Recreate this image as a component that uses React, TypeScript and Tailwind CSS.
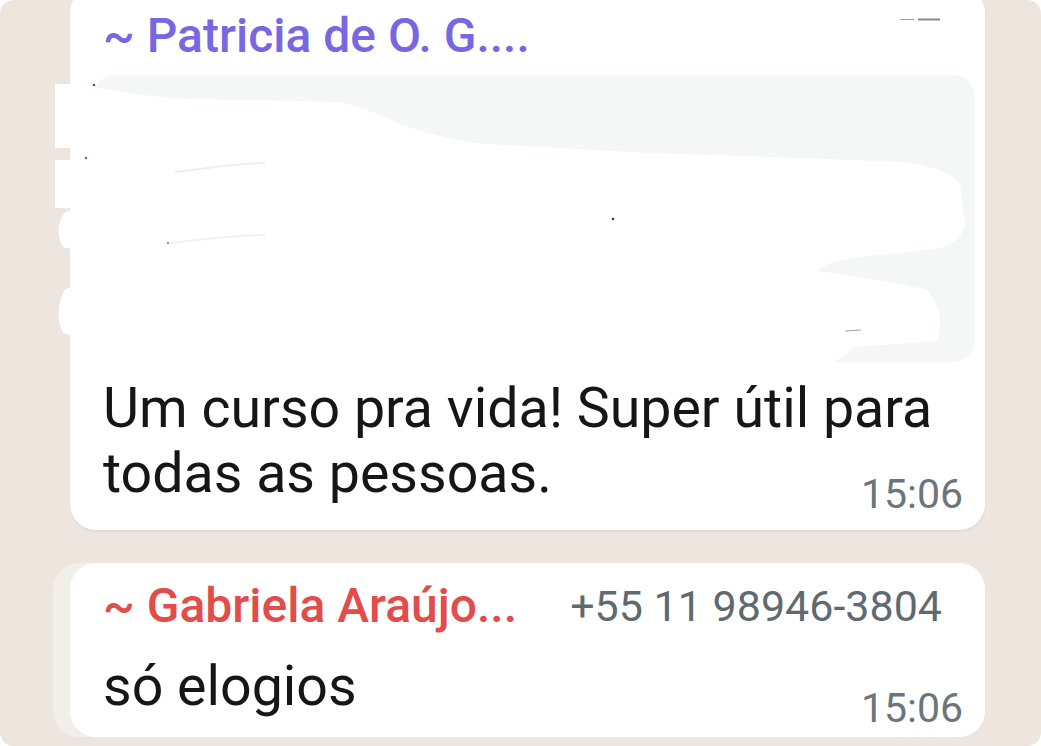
export default function App() {
  return (
    <div className="w-[1041px] h-[746px] bg-white font-['Roboto',sans-serif]">
      <div className="h-full overflow-hidden rounded-[14px] bg-[#ede6de]">
        {/* first message */}
        <div className="-mt-[13px] ml-[70px] w-[915px] rounded-[26px] bg-white pt-[21px] pb-[24px] pl-[33px] pr-[22px] shadow-[0_2px_2px_rgba(0,0,0,0.05)]">
          <div className="flex items-start justify-between">
            <span className="text-[48px] leading-[56px] font-medium text-[#7867e2]">~ Patricia de O. G....</span>
            <svg width="42" height="4" viewBox="0 0 42 4" className="mt-[10px] mr-[21px]">
              <rect x="0" y="1" width="14" height="1" fill="#9a9a9a" />
              <rect x="18" y="0.5" width="22" height="2" fill="#8a8a8a" />
            </svg>
          </div>
          <QuoteBlur />
          <div className="mt-[14px] text-[55.5px] leading-[65px] text-[#161616]">
            <p>Um curso pra vida! Super útil para</p>
            <div className="flex items-end justify-between">
              <span>todas as pessoas.</span>
              <span className="mb-[-9px] text-[41px] leading-[42px] text-[#6a767c]">15:06</span>
            </div>
          </div>
        </div>

        {/* second message */}
        <div className="mt-[33px] ml-[70px] w-[915px] rounded-[26px] bg-white pt-[15px] pb-[18px] pl-[33px] pr-[22px] shadow-[-17px_0_0_#f2eee9]">
          <div className="flex items-start justify-between">
            <span className="text-[48px] leading-[56px] font-medium text-[#e24c4b]">~ Gabriela Araújo...</span>
            <span className="mr-[21px] text-[43px] leading-[56px] text-[#5f6a70]">+55 11 98946-3804</span>
          </div>
          <div className="mt-[20px] flex items-end justify-between text-[#161616]">
            <span className="text-[55.5px] leading-[65px]">só elogios</span>
            <span className="mb-[-10px] text-[41px] leading-[42px] text-[#6a767c]">15:06</span>
          </div>
        </div>
      </div>
    </div>
  );
}

// blurred / erased quoted message area
function QuoteBlur() {
  return (
    <svg width="920" height="287" viewBox="0 0 920 287" className="-ml-[48px] mt-[11px] block overflow-visible">
      <rect x="38" y="0" width="882" height="287" rx="22" fill="#f5f7f6" />
      <path
        d="M15 9 L38 12 Q90 22 135 24 L285 27 Q320 36 345 49 Q380 62 420 68 L465 71 L595 78 L745 83 L845 87 Q895 92 905 110 L910 150 Q905 168 885 173 L845 178 L805 182 Q772 186 762 196 Q830 205 872 215 Q892 240 882 266 L800 272 L780 287 L15 287 Z"
        fill="#ffffff"
      />
      <rect x="0" y="9" width="20" height="64" fill="#ffffff" />
      <rect x="0" y="85" width="20" height="48" fill="#ffffff" />
      <path d="M20 135 L10 137 Q-2 155 8 172 L20 175 Z" fill="#ffffff" />
      <path d="M20 212 L10 214 Q-2 238 8 258 L20 262 Z" fill="#ffffff" />
      <circle cx="39" cy="10" r="1.3" fill="#2e6e5c" />
      <circle cx="31" cy="83" r="1.2" fill="#3d7c6c" />
      <circle cx="113" cy="168" r="1.1" fill="#8a7a5a" />
      <circle cx="558" cy="144" r="1.3" fill="#444" />
      <path d="M120 97 Q190 88 210 88" stroke="#efefef" strokeWidth="2" fill="none" />
      <path d="M115 168 Q180 160 210 160" stroke="#f1f1f1" strokeWidth="2" fill="none" />
      <path d="M790 256 L806 255" stroke="#a0a0a0" strokeWidth="1.2" />
    </svg>
  );
}
